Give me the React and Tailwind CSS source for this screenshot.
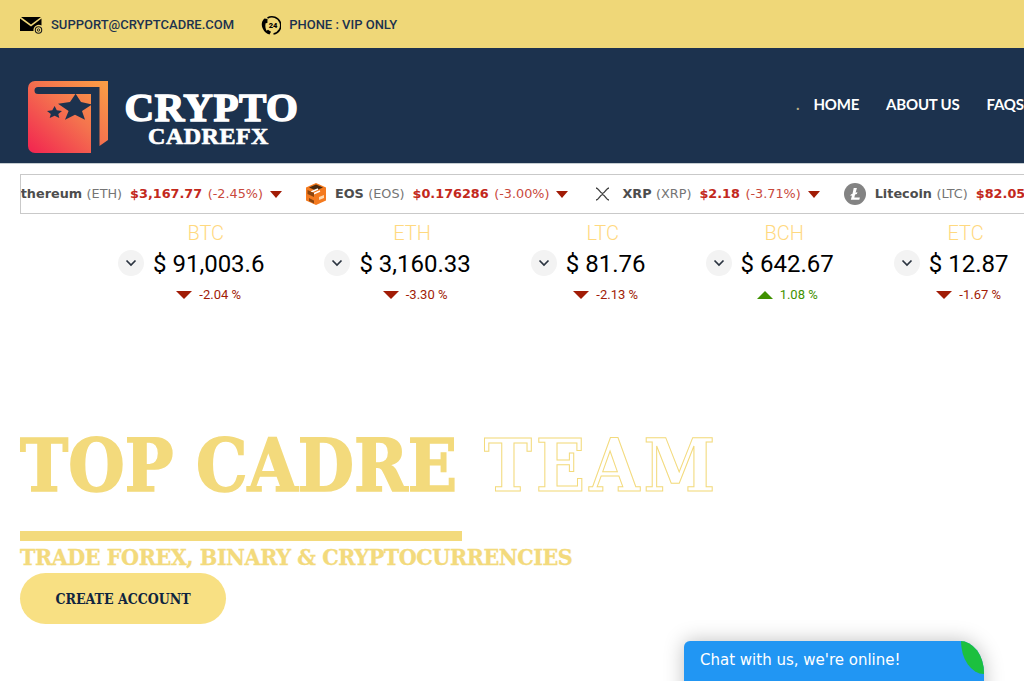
import React from 'react';

const stats = [
  { name: 'BTC', price: '$ 91,003.6', change: '-2.04 %', up: false },
  { name: 'ETH', price: '$ 3,160.33', change: '-3.30 %', up: false },
  { name: 'LTC', price: '$ 81.76', change: '-2.13 %', up: false },
  { name: 'BCH', price: '$ 642.67', change: '1.08 %', up: true },
  { name: 'ETC', price: '$ 12.87', change: '-1.67 %', up: false },
];

const MailIcon = () => (
  <svg width="24" height="20" viewBox="0 0 24 20">
    <path d="M1 2h20l-10 7.500z" fill="#000" />
    <path d="M0 3.500v12.500h13.500a5.500 5.500 0 0 1 8-5.500V3.500L11 11.500z" fill="#000" />
    <circle cx="18.500" cy="15" r="3.200" fill="none" stroke="#1c1c1c" strokeWidth="1.100" />
    <circle cx="18.500" cy="15" r="1.200" fill="none" stroke="#1c1c1c" strokeWidth="0.900" />
  </svg>
);

const PhoneIcon = () => (
  <svg width="20" height="20" viewBox="0 0 20 20">
    <path d="M3.500 3.500C.5 6 0 10 2 14c1.300 2.700 3.500 5 6.500 5.500l1.500-2.800-3-2-1.500 1C4.500 13.500 4 11 4.600 8.300l1.800-.4L6.500 4z" fill="#000" />
    <path d="M6.500 3A8.700 8.700 0 1 1 12.500 19" fill="none" stroke="#000" strokeWidth="1.600" />
    <text x="12" y="13" textAnchor="middle" fontSize="7.500" fontWeight="900" fontFamily="Roboto, sans-serif" fill="#000">24</text>
  </svg>
);

const LogoMark = () => (
  <svg width="82" height="74" viewBox="0 0 82 74" className="mt-[32px] shrink-0">
    <defs>
      <linearGradient id="bookFill" x1="0.05" y1="0.95" x2="0.95" y2="0.05">
        <stop offset="0" stopColor="#f22a50" />
        <stop offset="0.55" stopColor="#f4734e" />
        <stop offset="1" stopColor="#fb9b45" />
      </linearGradient>
    </defs>
    <path d="M8 1H81V60L72.500 66V7H11a3.500 3.500 0 0 0 0 7H64V73H8a7 7 0 0 1-7-7V8a7 7 0 0 1 7-7z" fill="url(#bookFill)" />
    <path d="M48.600 13.700L54 22l11 2.600L55 31l3 8.700-10-5-10 5 3.600-8.700L31 23.700 43 22z" fill="#1c324e" />
    <path d="M27.600 26l2.200 4.300 5.200.7-3.700 3 1 4-4.700-2.200-4.900 2.200 1.100-4L20 31l5.300-.7z" fill="#1c324e" />
  </svg>
);

const EosIcon = () => (
  <svg width="20" height="22" viewBox="0 0 20 22">
    <path d="M10 0l10 4.500v13L10 22 0 17.500v-13z" fill="#f47a1f" />
    <path d="M3 4.500L10 1.500l7 3-7 3z" fill="#4a2a10" />
    <path d="M5 9l7-3M6 11.500l8-3.500" stroke="#fff" strokeWidth="1.400" />
    <path d="M1.500 7l6.500 3v4L1.500 11zM3 15l5 2.500v3L3 18z" fill="#8a4510" />
    <path d="M13 14l5-2v3l-5 2z" fill="#ffd9b0" />
  </svg>
);

const XrpIcon = () => (
  <svg width="21" height="14" viewBox="-2.500 0 21 14" fill="none" stroke="#3f3f3f" strokeWidth="1.300">
    <path d="M1.500 1c2.500 0 3.500 4.500 6.500 5.500C11 5.500 12 1 14.500 1" />
    <path d="M1.500 13c2.500 0 3.500-4.500 6.500-5.500 3 1 4 5.500 6.500 5.500" />
  </svg>
);

const LitecoinIcon = () => (
  <svg width="22" height="22" viewBox="0 0 22 22">
    <circle cx="11" cy="11" r="11" fill="#838383" />
    <path d="M9.700 5h3.200l-1.300 4.800 1.800-.7-.5 1.800-1.800.7-.8 3h5.600l-.6 2.200H6.800l1.200-4.300-1.600.6.500-1.700 1.600-.6z" fill="#fff" />
  </svg>
);

const Triangle = ({ up }) => (
  <span
    className={`h-0 w-0 border-x-[8px] border-x-transparent ${up ? 'border-b-[8px] border-b-[#3f9100]' : 'border-t-[8px] border-t-[#a11c06]'}`}
  />
);

const TickerArrow = () => (
  <span className="ml-[7px] h-0 w-0 border-x-[6.5px] border-t-[7px] border-x-transparent border-t-[#a11c06]" />
);

const TickerItem = ({ icon, name, symbol, price, change }) => (
  <div className="flex shrink-0 items-center whitespace-nowrap">
    {icon}
    <span className="ml-[9px] font-bold text-[#4d4d4d]">{name}</span>
    <span className="ml-[4.5px] text-[#757575]">({symbol})</span>
    <span className="ml-[8px] font-bold text-[#c3281c]">{price}</span>
    <span className="ml-[5.5px] text-[#c9493c]">({change})</span>
    <TickerArrow />
  </div>
);

const Stat = ({ name, price, change, up }) => (
  <div className="flex shrink-0 items-start">
    <button className="mt-[30px] mr-[9px] flex h-[26px] w-[26px] items-center justify-center rounded-full bg-[#f3f3f3]">
      <svg width="12" height="8" viewBox="0 0 12 8" fill="none" stroke="#2b3440" strokeWidth="1.700">
        <path d="M1.500 1.500L6 6l4.500-4.500" />
      </svg>
    </button>
    <div className="flex flex-col items-center">
      <div className="h-[26px] pr-[6px] text-[20px] leading-[26px] font-light text-[#ffd97f]">{name}</div>
      <div className="mt-[2px] h-[32px] text-[24px] leading-[32px] text-black">{price}</div>
      <div className="mt-[7px] flex h-[16px] items-center gap-[7px] text-[13px] leading-[16px]">
        <Triangle up={up} />
        <span className={up ? 'text-[#3f9100]' : 'text-[#a11c06]'}>{change}</span>
      </div>
    </div>
  </div>
);

export default function App() {
  return (
    <div className="relative h-[681px] w-[1024px] overflow-hidden bg-white font-['Roboto',sans-serif]">
      <div className="flex h-[48px] items-center bg-[#efd778] pt-[1px] pl-[20px] text-[13px] font-medium text-[#1c324e]">
        <MailIcon />
        <span className="ml-[7px]">SUPPORT@CRYPTCADRE.COM</span>
        <span className="ml-[27px]"><PhoneIcon /></span>
        <span className="ml-[8px]">PHONE : VIP ONLY</span>
      </div>

      <header className="flex h-[116px] overflow-hidden border-b border-[#c5cdd1] bg-[#1c324e] pl-[27px]">
        <LogoMark />
        <div className="mt-[41px] ml-[16px] flex w-[173px] shrink-0 flex-col items-center font-['Liberation_Serif',serif] font-bold text-white">
          <span className="text-[41px] leading-[36px] tracking-[0.5px] [-webkit-text-stroke:1.5px_white]">CRYPTO</span>
          <span className="pr-[6px] text-[24px] leading-[22px] tracking-[0.5px] [-webkit-text-stroke:0.7px_white]">CADREFX</span>
        </div>
        <nav className="ml-[498px] flex h-[113px] shrink-0 items-center font-['Lato',sans-serif] text-[15px] font-bold tracking-[-0.2px] whitespace-nowrap text-white">
          <span className="mr-[14px] text-[#b7ad85]">.</span>
          <span>HOME</span>
          <span className="ml-[27px]">ABOUT US</span>
          <span className="ml-[27px]">FAQS</span>
        </nav>
      </header>

      <div className="mt-[10px] ml-[20px] flex h-[40px] items-center gap-[24px] overflow-hidden border-y border-l border-[#c9c9c9] font-['DejaVu_Sans',sans-serif] text-[12.8px]">
        <div className="-ml-[9px] flex shrink-0 items-center whitespace-nowrap">
          <span className="font-bold text-[#4d4d4d]">Ethereum</span>
          <span className="ml-[4.5px] text-[#757575]">(ETH)</span>
          <span className="ml-[8px] font-bold text-[#c3281c]">$3,167.77</span>
          <span className="ml-[5.5px] text-[#c9493c]">(-2.45%)</span>
          <TickerArrow />
        </div>
        <TickerItem icon={<EosIcon />} name="EOS" symbol="EOS" price="$0.176286" change="-3.00%" />
        <TickerItem icon={<XrpIcon />} name="XRP" symbol="XRP" price="$2.18" change="-3.71%" />
        <TickerItem icon={<LitecoinIcon />} name="Litecoin" symbol="LTC" price="$82.05" change="-2.10%" />
      </div>

      <div className="flex gap-[60px] pt-[6px] pl-[118px]">
        {stats.map((s) => (
          <Stat key={s.name} {...s} />
        ))}
      </div>

      <div className="pt-[125px] pl-[20px] font-['DejaVu_Serif',serif] font-bold font-stretch-condensed">
        <h1 className="h-[76px] text-[72px] leading-[76px] whitespace-nowrap text-[#f3da7c] [-webkit-text-stroke:1.5px_#f3da7c]">
          TOP CADRE <span className="ml-[4px] tracking-[4px] text-white [-webkit-text-stroke:1px_#f3da7c]">TEAM</span>
        </h1>
        <div className="mt-[27px] h-[10px] w-[442px] bg-[#f3da7c]" />
        <h2 className="h-[32px] text-[23px] leading-[32px] tracking-[-0.45px] whitespace-nowrap text-[#f3da7c] [-webkit-text-stroke:0.3px_#f3da7c]">TRADE FOREX, BINARY &amp; CRYPTOCURRENCIES</h2>
        <button className="flex h-[51px] w-[206px] items-center justify-center rounded-[26px] bg-[#f8e083] pt-[1px] text-[14px] font-bold font-stretch-condensed text-[#10253f]">
          CREATE ACCOUNT
        </button>
      </div>

      <div className="absolute top-[641px] left-[684px] h-[60px] w-[300px] overflow-hidden rounded-tl-[6px] rounded-tr-[24px_32px] bg-[#2196f3] pt-[9px] pl-[16px] font-['DejaVu_Sans',sans-serif] text-[15px] leading-[20px] text-white shadow-[0_0_20px_rgba(0,0,0,0.25)]">
        Chat with us, we're online!
        <span className="absolute -top-[33px] -right-[23px] h-[66px] w-[46px] rounded-[50%] bg-[#1cc03f]" />
      </div>
    </div>
  );
}
